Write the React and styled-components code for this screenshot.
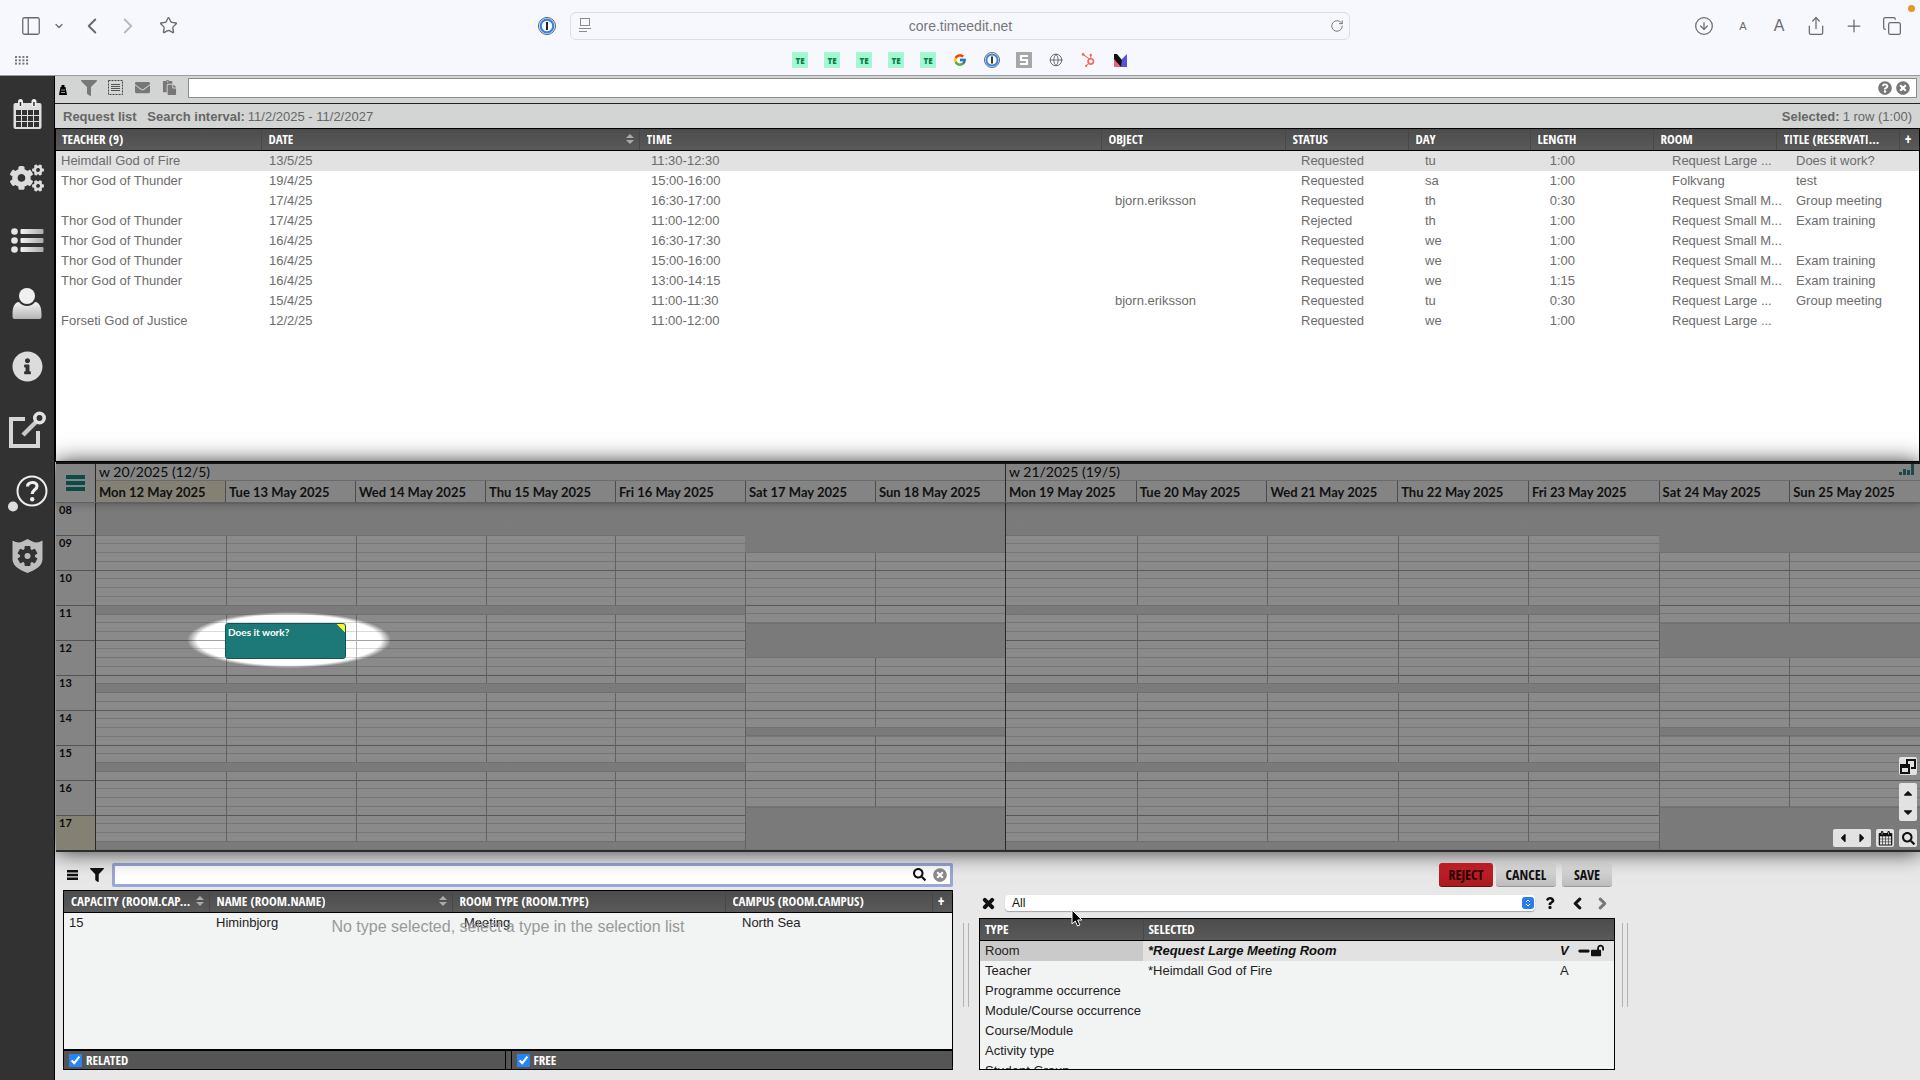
import React from "react";
import styled, { createGlobalStyle, css } from "styled-components";
import { ChevronDown, ChevronLeft, ChevronRight, Star, PanelLeft, Globe, RotateCw, CircleArrowDown, Share, Plus, Copy } from "lucide-react";
import { FaFilter, FaCogs, FaInfoCircle, FaSearch, FaTimes, FaTimesCircle, FaQuestion, FaQuestionCircle, FaChevronLeft, FaChevronRight, FaHubspot, FaLockOpen, FaMinus, FaEnvelope, FaPaste, FaCaretUp, FaCaretDown, FaCaretLeft, FaCaretRight } from "react-icons/fa";
import { FcGoogle } from "react-icons/fc";

const sans = `"Helvetica Neue Light", "Liberation Sans", Arial, sans-serif`;
const condensed = `"Open Sans Condensed", "Liberation Sans Narrow", "Open Sans", sans-serif`;
const lato = `Lato, "Open Sans", sans-serif`;

const GlobalStyle = createGlobalStyle`
  *, *::before, *::after { box-sizing: border-box; }
  body { margin: 0; font-family: ${sans}; font-size: 13px; background: #e8e8e8; }
  button, input, select { font: inherit; color: inherit; }
  button { cursor: pointer; }
  svg { flex: none; }
`;

const plainButton = css`
  display: inline-flex;
  align-items: center;
  justify-content: center;
  padding: 0;
  border: 0;
  background: none;
`;

const Page = styled.div`
  display: flex;
  flex-direction: column;
  height: 100vh;
  overflow: hidden;
`;

/* ---------- browser window ---------- */

const Chrome = styled.header`
  position: relative;
  flex: none;
  background: #f7f8fd;
  border-bottom: 1px solid #9b9ba1;
  color: #6a6a6e;
`;
const RecordingDot = styled.span`
  position: absolute;
  top: 5px;
  right: 5px;
  width: 7px;
  height: 7px;
  border-radius: 50%;
  background: #e29a1c;
`;
const ChromeBar = styled.div`
  display: grid;
  grid-template-columns: 1fr minmax(0, 780px) 1fr;
  align-items: center;
  height: 51px;
`;
const ChromeGroup = styled.div`
  display: flex;
  align-items: center;
  justify-content: ${(p) => (p.$end ? "flex-end" : "flex-start")};
  padding: 0 9px 0 12px;
`;
const ChromeButton = styled.button`
  ${plainButton}
  width: ${(p) => p.$w}px;
  height: 28px;
  margin-left: ${(p) => (p.$push ? "auto" : "0")};
  color: ${(p) => (p.$faded ? "#b9b9bf" : "#6a6a6e")};
  font-size: ${(p) => (p.$size || 13)}px;
`;
const Address = styled.div`
  display: flex;
  align-items: center;
  gap: 8px;
  height: 28px;
  padding: 0 5px 0 8px;
  border: 1px solid #dcdde3;
  border-radius: 6px;
`;
const AddressInput = styled.input`
  flex: 1;
  min-width: 0;
  border: 0;
  background: none;
  text-align: center;
  font-size: 14px;
  color: #77777b;
`;
const Bookmarks = styled.nav`
  display: grid;
  grid-template-columns: 1fr auto 1fr;
  align-items: center;
  height: 24px;
  padding: 0 15px 6px;
`;
const BookmarkList = styled.div`
  display: flex;
  gap: 16px;
`;
const Bookmark = styled.a`
  display: flex;
  align-items: center;
  justify-content: center;
  width: 16px;
  height: 16px;
  font: 800 8px "Open Sans", sans-serif;
  text-decoration: none;
  color: #0a7d4e;
  background: ${(p) => p.$bg || "none"};
`;

/* ---------- shell ---------- */

const Shell = styled.div`
  flex: 1;
  min-height: 0;
  display: flex;
`;
const Sidebar = styled.nav`
  position: relative;
  z-index: 3;
  flex: none;
  width: 55px;
  padding-top: 7px;
  background: #323232;
  border-right: 1px solid #000;
`;
const SidebarButton = styled.button`
  ${plainButton}
  width: 54px;
  height: 63px;
  color: #dcdcdc;
`;
const Main = styled.main`
  flex: 1;
  min-width: 0;
  display: flex;
  flex-direction: column;
`;

/* ---------- request list ---------- */

const RequestPanel = styled.section`
  flex: 1;
  min-height: 0;
  display: flex;
  flex-direction: column;
  background: #fff;
`;
const RequestToolbar = styled.div`
  display: flex;
  align-items: center;
  height: 28px;
  padding: 2px 3px 6px 1px;
  background: #d3d5d4;
  border-bottom: 1px solid #222;
`;
const ToolButton = styled.button`
  ${plainButton}
  width: ${(p) => p.$w || 26}px;
  height: 20px;
  color: ${(p) => p.$c || "#777"};
`;
const ListSearch = styled.div`
  flex: 1;
  display: flex;
  align-items: center;
  height: 20px;
  margin-left: 12px;
  padding-right: 4px;
  background: #fff;
  border: 1px solid #8c8c8c;
`;
const BareInput = styled.input`
  flex: 1;
  min-width: 0;
  height: 100%;
  padding: 0 4px;
  border: 0;
  outline: 0;
  background: none;
`;
const RequestInfo = styled.div`
  display: flex;
  justify-content: space-between;
  align-items: center;
  height: 24px;
  padding: 0 8px;
  background: #d3d5d4;
  color: #666;
  b { margin-right: 3px; }
  b + b { margin-left: 4px; }
`;
const TableFrame = styled.div`
  flex: 1;
  min-height: 0;
  overflow: hidden;
  position: relative;
  border: 1px solid #000;
  background: ${(p) => p.$bg || "#fff"};
`;
const Table = styled.table`
  width: 100%;
  table-layout: fixed;
  border-collapse: collapse;
`;
const Th = styled.th`
  height: 21px;
  padding: 0 5px 0 ${(p) => (p.$pad === undefined ? 7 : p.$pad)}px;
  text-align: left;
  font: 700 ${(p) => (p.$add ? 16 : 13)}px/20px ${condensed};
  white-space: nowrap;
  color: #fff;
  background: linear-gradient(#4c4c4c, #5a5a5a);
  border-bottom: 1px solid #000;
  border-left: ${(p) => (p.$first ? "0" : "1px solid #474747")};
`;
const ThInner = styled.span`
  display: flex;
  align-items: center;
  justify-content: space-between;
`;
const Clip = styled.span`
  overflow: hidden;
  text-overflow: ellipsis;
`;
const Tr = styled.tr`
  height: 20px;
  background: ${(p) => (p.$selected ? "#e2e2e2" : "transparent")};
`;
const Td = styled.td`
  padding: 0 ${(p) => p.$right || 0}px 0 ${(p) => p.$pad || 0}px;
  text-align: ${(p) => (p.$right ? "right" : "left")};
  line-height: 20px;
  white-space: nowrap;
  color: ${(p) => p.$c || "#6c6c6c"};
  background: ${(p) => p.$bg || "transparent"};
  font-style: ${(p) => (p.$em ? "italic" : "normal")};
`;
const RowIcons = styled.span`
  display: flex;
  align-items: center;
  gap: 1px;
`;

/* ---------- calendar ---------- */

const Calendar = styled.section`
  position: relative;
  z-index: 2;
  flex: none;
  border-top: 2px solid #161616;
  border-bottom: 2px solid #2c2c2c;
  box-shadow: 0 0 21px rgba(0, 0, 0, 0.8);
  background: #e2e2e2;
  margin-left: 1px;
  font-family: ${lato};
  color: #111;
`;
const CalHead = styled.div`
  position: relative;
  display: flex;
  height: 39px;
  background: #f4f4f4;
  border-bottom: 1px solid #b0b0b0;
  box-shadow: 0 2px 8px rgba(0, 0, 0, 0.22);
`;
const Corner = styled.div`
  flex: none;
  width: 39px;
  display: flex;
  align-items: center;
  justify-content: center;
`;
const CornerButton = styled.button`
  ${plainButton}
  color: #17897f;
`;
const WeekHead = styled.div`
  flex: ${(p) => p.$grow};
  min-width: 0;
  border-left: 1px solid #4a4a4a;
`;
const WeekTitle = styled.div`
  height: 17px;
  padding-left: 3px;
  font-size: 14px;
  line-height: 16px;
  border-bottom: 1px solid #c4c4c4;
`;
const DayHeads = styled.div`
  display: flex;
`;
const DayHead = styled.div`
  flex: 1;
  min-width: 0;
  height: 21px;
  padding-left: 3px;
  font-size: 13px;
  font-weight: 700;
  line-height: 23px;
  white-space: nowrap;
  color: #1e1e1e;
  border-left: ${(p) => (p.$first ? "0" : "1px solid #8c8c8c")};
  background: ${(p) => (p.$today ? "#f4efd6" : "transparent")};
`;
const CalBody = styled.div`
  display: flex;
  height: 347px;
`;
const Hours = styled.div`
  flex: none;
  width: 39px;
  background: #f4f4f4;
  overflow: hidden;
`;
const Hour = styled.div`
  height: ${(p) => (p.$short ? 32 : 35)}px;
  padding: 0 3px;
  font-size: 11px;
  font-weight: 700;
  line-height: 14px;
  border-top: ${(p) => (p.$short ? "0" : "1px solid #999")};
  background: ${(p) => (p.$today ? "#f4efd6" : "transparent")};
`;
const Week = styled.div`
  flex: ${(p) => p.$grow};
  min-width: 0;
  display: flex;
  border-left: 1px solid #4a4a4a;
`;
const Day = styled.div`
  flex: 1;
  min-width: 0;
  display: flex;
  flex-direction: column;
  background-color: #fff;
  background-image: repeating-linear-gradient(
    #a3a3a3 0 1px, transparent 1px 8px,
    #d9d9d9 8px 9px, transparent 9px 17px,
    #d9d9d9 17px 18px, transparent 18px 26px,
    #d9d9d9 26px 27px, transparent 27px 35px
  );
  background-position: 0 32px;
  background-size: 100% 35px;
`;
const Slot = styled.div`
  flex: none;
  height: ${(p) => p.$h}px;
  background: ${(p) => (p.$closed ? "#e2e2e2" : "transparent")};
  border: 0 solid #cfcfcf;
  border-width: ${(p) => (p.$closed ? "1px 0" : "0")};
  border-left: ${(p) => (p.$line ? "1px solid #b4b4b4" : "0")};
`;
const Dim = styled.div`
  position: absolute;
  inset: 0;
  pointer-events: none;
  background: radial-gradient(ellipse 102px 28px at 233px 176px, transparent 90%, rgba(0, 0, 0, 0.46) 100%);
`;
const Booking = styled.button`
  position: absolute;
  top: 159px;
  left: 169px;
  width: 121px;
  height: 36px;
  padding: 1px 2px;
  display: flex;
  justify-content: flex-start;
  align-items: flex-start;
  overflow: hidden;
  border: 1px solid #0f5654;
  border-radius: 3px;
  background: linear-gradient(225deg, #fdf22a 6px, #1c7977 6px);
  color: #fff;
  font-size: 10px;
  font-weight: 700;
  line-height: 14px;
`;
const Usage = styled.svg`
  position: absolute;
  top: 0;
  right: 5px;
`;
const Controls = styled.div`
  position: absolute;
  right: 3px;
  bottom: 3px;
  display: flex;
  flex-direction: column;
  align-items: flex-end;
  gap: 8px;
`;
const ControlRow = styled.div`
  display: flex;
  gap: 5px;
`;
const ControlGroup = styled.div`
  display: flex;
  flex-direction: ${(p) => (p.$column ? "column" : "row")};
  border-radius: 2px;
  background: #e2e2e2;
`;
const ControlButton = styled.button`
  ${plainButton}
  width: ${(p) => p.$w || 18}px;
  height: ${(p) => p.$h || 18}px;
  color: #111;
`;

/* ---------- booking area ---------- */

const Bottom = styled.section`
  flex: none;
  display: grid;
  grid-template-columns: minmax(0, 890px) 26px minmax(0, 636px) 20px;
  height: 228px;
  padding: 10px 0 10px 8px;
  background: #e8e8e8;
  color: #111;
`;
const Column = styled.div`
  display: flex;
  flex-direction: column;
  min-width: 0;
  min-height: 0;
`;
const Splitter = styled.div`
  align-self: start;
  justify-self: center;
  width: 6px;
  height: 84px;
  margin-top: 61px;
  border: solid #b4b4b4;
  border-width: 0 1px;
`;
const SearchRow = styled.div`
  display: flex;
  align-items: center;
  height: 25px;
  margin-bottom: 3px;
`;
const SearchBox = styled.div`
  flex: 1;
  display: flex;
  align-items: center;
  gap: 7px;
  height: 24px;
  padding-right: 3px;
  background: #fff;
  border: 3px solid #9aa5d8;
  border-radius: 2px;
`;
const EmptyNote = styled.p`
  position: absolute;
  top: 25px;
  left: 0;
  right: 0;
  margin: 0;
  text-align: center;
  font-size: 16px;
  line-height: 22px;
  color: #999;
  pointer-events: none;
`;
const Filters = styled.div`
  display: flex;
  gap: 5px;
  height: 20px;
  border: 1px solid #000;
  background: #555;
`;
const FilterLabel = styled.label`
  flex: 1;
  display: flex;
  align-items: center;
  gap: 4px;
  padding-left: 5px;
  font: 700 13px/18px ${condensed};
  color: #fff;
  border: solid #000;
  border-width: ${(p) => (p.$first ? "0 1px 0 0" : "0 0 0 1px")};
`;
const Check = styled.input`
  width: 13px;
  height: 13px;
  margin: 0;
  accent-color: #2a84f0;
`;
const Actions = styled.div`
  display: flex;
  justify-content: flex-end;
  gap: 3px;
  height: 25px;
  padding: 1px 3px 0 0;
  margin-bottom: 8px;
`;
const ActionButton = styled.button`
  width: ${(p) => p.$w}px;
  height: 24px;
  margin-left: ${(p) => p.$gap || 0}px;
  padding: 0;
  border: 0;
  border-bottom: 1px solid ${(p) => (p.$danger ? "#5d1010" : "#999")};
  border-radius: 3px;
  background: ${(p) => (p.$danger ? "linear-gradient(#cf2229, #a81a20)" : "linear-gradient(#e4e4e4, #bcbcbc)")};
  color: ${(p) => (p.$danger ? "#2c0000" : "#111")};
  font: 700 14px ${condensed};
`;
const TypeRow = styled.div`
  display: flex;
  align-items: center;
  height: 16px;
  margin-bottom: 7px;
`;
const SelectBox = styled.div`
  flex: 1;
  display: flex;
  align-items: center;
  height: 16px;
  padding-right: 1px;
  margin-left: 8px;
  background: #fff;
  border-radius: 4px;
  box-shadow: 0 1px 1px rgba(0, 0, 0, 0.3);
`;
const Select = styled.select`
  flex: 1;
  height: 16px;
  padding: 0 7px;
  border: 0;
  background: none;
  appearance: none;
  font-size: 12px;
`;
const Badge = styled.span`
  display: flex;
  width: 12px;
  height: 12px;
  border-radius: 3px;
  background: #2b7cf0;
`;
const Cursor = styled.svg`
  position: fixed;
  left: 1071px;
  top: 909px;
  z-index: 5;
  pointer-events: none;
`;

/* ---------- drawings ---------- */

const CalendarGlyph = ({ size = 31, id = "c", light = true, cell = "#323232" }) => (
  <svg width={size} height={size} viewBox="0 0 31 31" aria-hidden="true">
    <rect x="1.500" y="4" width="28" height="26" rx="2" fill={light ? "#dedede" : "#111"} />
    <rect x="6" y="0" width="5" height="8" rx="2.500" fill={light ? "#eee" : "#111"} />
    <rect x="19.500" y="0" width="5" height="8" rx="2.500" fill={light ? "#eee" : "#111"} />
    <rect x="7.700" y="3" width="1.500" height="4" fill={cell} />
    <rect x="21.200" y="3" width="1.500" height="4" fill={cell} />
    {[0, 1, 2].map((r) => [0, 1, 2, 3].map((c) => (
      <rect key={id + r + c} x={4 + c * 6} y={11 + r * 6} width="5" height="5" fill={cell} />
    )))}
  </svg>
);
const ListGlyph = () => (
  <svg width="33" height="25" viewBox="0 0 33 25" aria-hidden="true">
    <defs><linearGradient id="lst" x1="0" x2="1"><stop offset="0" stopColor="#f2f2f2" /><stop offset="1" stopColor="#aaa" /></linearGradient></defs>
    {[0, 9, 18].map((y) => (
      <g key={y}><circle cx="3.500" cy={y + 3.5} r="3.300" fill="#e6e6e6" /><rect x="9.500" y={y + 1} width="23" height="5" rx="1" fill="url(#lst)" /></g>
    ))}
  </svg>
);
const UserGlyph = () => (
  <svg width="30" height="31" viewBox="0 0 30 31" aria-hidden="true">
    <defs><linearGradient id="usr" x1="0" x2="0" y1="0" y2="1"><stop offset="0" stopColor="#f4f4f4" /><stop offset="1" stopColor="#b4b4b4" /></linearGradient></defs>
    <path d="M7 14C2.500 14.500.500 19 .500 26v3q0 2 2 2h25q2 0 2-2v-3c0-7-2-11.500-6.500-12a10 10 0 0 1-16 0z" fill="url(#usr)" />
    <circle cx="15" cy="8" r="8" fill="#f0f0f0" />
  </svg>
);
const LaunchGlyph = () => (
  <svg width="37" height="38" viewBox="0 0 37 38" fill="none" aria-hidden="true">
    <path d="M16 8H2v27h27V20" stroke="#d6d6d6" strokeWidth="4" />
    <path d="M14 24L28 10" stroke="#c8c8c8" strokeWidth="4.500" />
    <circle cx="30.500" cy="7" r="4.700" stroke="#e2e2e2" strokeWidth="3.600" />
  </svg>
);
const HelpGlyph = () => (
  <svg width="44" height="40" viewBox="0 0 44 40" fill="none" aria-hidden="true">
    <circle cx="27" cy="18" r="14.500" stroke="#eee" strokeWidth="2" />
    <path d="M22.500 13.500c0-5 9.500-5.500 9.500-.5 0 4-4.800 3.600-4.800 8" stroke="#eee" strokeWidth="3.200" />
    <circle cx="27.200" cy="26.300" r="2.200" fill="#eee" />
    <circle cx="8" cy="33.500" r="5" fill="#dedede" />
  </svg>
);
const ShieldGlyph = () => (
  <svg width="31" height="34" viewBox="0 0 31 34" aria-hidden="true">
    <path d="M.500 1.500Q6 5 10.500 2.500L15.500 0l5 2.500Q25 5 30.500 1.500V20c0 7-7 11-15 14C7.500 31 .500 27 .500 20z" fill="#bdbdbd" />
    <g fill="#323232">
      {[0, 60, 120].map((a) => <rect key={a} x="12.500" y="7" width="6" height="20" rx="1" transform={`rotate(${a} 15.500 17)`} />)}
      <circle cx="15.500" cy="17" r="7.500" />
    </g>
    <circle cx="15.500" cy="17" r="3" fill="#bdbdbd" />
  </svg>
);
const SortGlyph = () => (
  <svg width="8" height="10" viewBox="0 0 8 10" aria-hidden="true"><path d="M0 4L4 0l4 4zM0 6h8l-4 4z" fill="#aaa" /></svg>
);
const OneGlyph = ({ size = 18 }) => (
  <svg width={size} height={size} viewBox="0 0 18 18" aria-hidden="true">
    <circle cx="9" cy="9" r="8.500" fill="#fff" stroke="#4a5c74" />
    <circle cx="9" cy="9" r="6.300" fill="#fff" stroke="#3584e0" strokeWidth="2.200" />
    <rect x="8" y="5" width="2" height="8" fill="#222" />
  </svg>
);
const ReaderGlyph = () => (
  <svg width="12" height="15" viewBox="0 0 12 15" fill="none" stroke="#8a8a8e" aria-hidden="true"><rect x="1.500" y=".5" width="9" height="7" /><path d="M0 10.500h12M0 13.500h8" /></svg>
);
const SelectionGlyph = () => (
  <svg width="15" height="15" viewBox="0 0 15 15" fill="none" stroke="#444" aria-hidden="true"><rect x=".5" y=".5" width="14" height="14" strokeDasharray="2 1" /><path d="M3 4.500h9M3 6.500h9M3 8.500h9M3 10.500h9" stroke="#555" /></svg>
);
const WeightGlyph = () => (
  <svg width="8" height="14" viewBox="0 0 8 14" aria-hidden="true"><path d="M2.500 4h3v2h1l1.500 8H0l1.500-8h1z" fill="#000" /><path d="M2 9h4M2 11.500h4" stroke="#999" /></svg>
);
const WindowsGlyph = () => (
  <svg width="16" height="15" viewBox="0 0 16 15" fill="none" stroke="#111" strokeWidth="2" aria-hidden="true"><path d="M7 5V1h8v8h-4" /><rect x="1" y="6" width="8" height="8" /><path d="M1 7.500h8" strokeWidth="3" /></svg>
);
const MenuGlyph = () => (
  <svg width="11" height="10" viewBox="0 0 11 10" aria-hidden="true"><path d="M0 0h11v2.400H0zM0 3.800h11v2.400H0zM0 7.600h11V10H0z" fill="currentColor" /></svg>
);

/* ---------- data ---------- */

const requestColumns = [
  { label: "TEACHER (9)", width: 205, pad: 5 },
  { label: "DATE", width: 378, pad: 8, sort: true },
  { label: "TIME", pad: 12 },
  { label: "OBJECT", width: 184, pad: 14 },
  { label: "STATUS", width: 123, pad: 16 },
  { label: "DAY", width: 122, pad: 17 },
  { label: "LENGTH", width: 123, pad: 0, right: 78 },
  { label: "ROOM", width: 123, pad: 19 },
  { label: "TITLE (RESERVATI...", width: 123, pad: 20 },
];
const thor = "Thor God of Thunder";
const small = "Request Small M...";
const large = "Request Large ...";
const requests = [
  ["Heimdall God of Fire", "13/5/25", "11:30-12:30", "", "Requested", "tu", "1:00", large, "Does it work?"],
  [thor, "19/4/25", "15:00-16:00", "", "Requested", "sa", "1:00", "Folkvang", "test"],
  ["", "17/4/25", "16:30-17:00", "bjorn.eriksson", "Requested", "th", "0:30", small, "Group meeting"],
  [thor, "17/4/25", "11:00-12:00", "", "Rejected", "th", "1:00", small, "Exam training"],
  [thor, "16/4/25", "16:30-17:30", "", "Requested", "we", "1:00", small, ""],
  [thor, "16/4/25", "15:00-16:00", "", "Requested", "we", "1:00", small, "Exam training"],
  [thor, "16/4/25", "13:00-14:15", "", "Requested", "we", "1:15", small, "Exam training"],
  ["", "15/4/25", "11:00-11:30", "bjorn.eriksson", "Requested", "tu", "0:30", large, "Group meeting"],
  ["Forseti God of Justice", "12/2/25", "11:00-12:00", "", "Requested", "we", "1:00", large, ""],
];
const weekNames = ["Mon", "Tue", "Wed", "Thu", "Fri", "Sat", "Sun"];
const weeks = [
  { title: "w 20/2025 (12/5)", start: 12, grow: 910 },
  { title: "w 21/2025 (19/5)", start: 19, grow: 915 },
];
// Heights alternate closed, open, closed ... from the top of the grid.
const weekdaySlots = [33, 69, 10, 68, 10, 69, 10, 69, 9];
const weekendSlots = [50, 70, 35, 69, 9, 71, 43];
const hours = ["08", "09", "10", "11", "12", "13", "14", "15", "16", "17"];
const roomColumns = [
  { label: "CAPACITY (ROOM.CAP...", width: 145, pad: 5, value: "15", sort: true },
  { label: "NAME (ROOM.NAME)", width: 243, pad: 7, value: "Himinbjorg", sort: true },
  { label: "ROOM TYPE (ROOM.TYPE)", width: 273, pad: 12, value: "Meeting" },
  { label: "CAMPUS (ROOM.CAMPUS)", pad: 17, value: "North Sea" },
];
const types = ["Programme occurrence", "Module/Course occurrence", "Course/Module", "Activity type", "Student Group"];

const HeadCell = ({ col, first, pad }) => (
  <Th $first={first} $pad={pad} scope="col"><ThInner><Clip>{col.label}</Clip>{col.sort && <SortGlyph />}</ThInner></Th>
);

function BrowserBar() {
  return (
    <Chrome>
      <RecordingDot />
      <ChromeBar>
        <ChromeGroup>
          <ChromeButton $w={38} aria-label="Sidebar"><PanelLeft size={22} strokeWidth={1.4} /></ChromeButton>
          <ChromeButton $w={18} aria-label="Tab groups"><ChevronDown size={12} strokeWidth={2.5} /></ChromeButton>
          <ChromeButton $w={48} aria-label="Back"><ChevronLeft size={26} strokeWidth={1.8} /></ChromeButton>
          <ChromeButton $w={24} $faded aria-label="Forward"><ChevronRight size={26} strokeWidth={1.8} /></ChromeButton>
          <ChromeButton $w={56} aria-label="Favourites"><Star size={19} strokeWidth={1.7} /></ChromeButton>
          <ChromeButton $w={28} $push aria-label="Passwords"><OneGlyph /></ChromeButton>
        </ChromeGroup>
        <Address>
          <ReaderGlyph />
          <AddressInput aria-label="Address" defaultValue="core.timeedit.net" />
          <RotateCw size={14} strokeWidth={1.5} />
        </Address>
        <ChromeGroup $end>
          <ChromeButton $w={42} aria-label="Downloads"><CircleArrowDown size={20} strokeWidth={1.5} /></ChromeButton>
          <ChromeButton $w={36} $size={11}>A</ChromeButton>
          <ChromeButton $w={36} $size={16}>A</ChromeButton>
          <ChromeButton $w={38} aria-label="Share"><Share size={20} strokeWidth={1.5} /></ChromeButton>
          <ChromeButton $w={38} aria-label="New tab"><Plus size={20} strokeWidth={1.5} /></ChromeButton>
          <ChromeButton $w={38} aria-label="Tabs"><Copy size={20} strokeWidth={1.5} /></ChromeButton>
        </ChromeGroup>
      </ChromeBar>
      <Bookmarks>
        <svg width="14" height="9" viewBox="0 0 14 9" aria-hidden="true">
          {[0, 1, 2].map((r) => [0, 1, 2, 3].map((c) => <rect key={`${r}${c}`} x={c * 3.7} y={r * 3.3} width="2" height="2" fill="#77777b" />))}
        </svg>
        <BookmarkList>
          {[1, 2, 3, 4, 5].map((n) => <Bookmark key={n} href="#te" $bg="#a5f7d3">TE</Bookmark>)}
          <Bookmark href="#g" aria-label="Google"><FcGoogle size={14} /></Bookmark>
          <Bookmark href="#op" aria-label="Passwords"><OneGlyph size={16} /></Bookmark>
          <Bookmark href="#s" aria-label="S">
            <svg width="16" height="16" viewBox="0 0 16 16" aria-hidden="true"><rect width="16" height="16" fill="#a6a6a6" /><path d="M12 4H5v4h6v4H4" fill="none" stroke="#fff" strokeWidth="2.200" /></svg>
          </Bookmark>
          <Bookmark href="#w" aria-label="Web"><Globe size={14} color="#666" strokeWidth={1.6} /></Bookmark>
          <Bookmark href="#h" aria-label="HubSpot"><FaHubspot size={14} color="#f4695c" /></Bookmark>
          <Bookmark href="#m" aria-label="M">
            <svg width="13" height="13" viewBox="0 0 13 13" aria-hidden="true"><path d="M0 0h3l5 6v7H0z" fill="#111" /><path d="M0 5l7 8H0z" fill="#f0607e" /><path d="M13 0L8 5l-1 8h6z" fill="#5b4fe0" /></svg>
          </Bookmark>
        </BookmarkList>
      </Bookmarks>
    </Chrome>
  );
}

function Requests() {
  return (
    <RequestPanel>
      <RequestToolbar>
        <ToolButton $w={14} $c="#000" aria-label="Weight"><WeightGlyph /></ToolButton>
        <ToolButton $w={38} aria-label="Filter"><FaFilter size={16} /></ToolButton>
        <ToolButton $w={14} aria-label="Select all"><SelectionGlyph /></ToolButton>
        <ToolButton $w={40} aria-label="Mail"><FaEnvelope size={15} /></ToolButton>
        <ToolButton $w={14} aria-label="Copy"><FaPaste size={15} /></ToolButton>
        <ListSearch>
          <BareInput aria-label="Search requests" />
          <ToolButton $w={18} aria-label="Help"><FaQuestionCircle size={14} /></ToolButton>
          <ToolButton $w={18} aria-label="Clear"><FaTimesCircle size={14} /></ToolButton>
        </ListSearch>
      </RequestToolbar>
      <RequestInfo>
        <span><b>Request list</b> <b>Search interval:</b>11/2/2025 - 11/2/2027</span>
        <span><b>Selected:</b>1 row (1:00)</span>
      </RequestInfo>
      <TableFrame>
        <Table>
          <colgroup>
            {requestColumns.map((c) => <col key={c.label} width={c.width} />)}
            <col width={20} />
          </colgroup>
          <thead>
            <tr>
              {requestColumns.map((c, i) => <HeadCell key={c.label} col={c} first={i === 0} pad={i === 0 ? 6 : 7} />)}
              <Th $add $pad={5} scope="col">+</Th>
            </tr>
          </thead>
          <tbody>
            {requests.map((row, i) => (
              <Tr key={i} $selected={i === 0}>
                {row.map((v, j) => <Td key={j} $pad={requestColumns[j].pad} $right={requestColumns[j].right}>{v}</Td>)}
                <Td />
              </Tr>
            ))}
          </tbody>
        </Table>
      </TableFrame>
    </RequestPanel>
  );
}

function Schedule() {
  return (
    <Calendar>
      <CalHead>
        <Corner>
          <CornerButton aria-label="Calendar menu">
            <svg width="19" height="16" viewBox="0 0 19 16" aria-hidden="true"><path d="M0 0h19v4H0zM0 6h19v4H0zM0 12h19v4H0z" fill="currentColor" /></svg>
          </CornerButton>
        </Corner>
        {weeks.map((w) => (
          <WeekHead key={w.title} $grow={w.grow}>
            <WeekTitle>{w.title}</WeekTitle>
            <DayHeads>
              {weekNames.map((d, i) => (
                <DayHead key={d} $first={i === 0} $today={w.start + i === 12}>{`${d} ${w.start + i} May 2025`}</DayHead>
              ))}
            </DayHeads>
          </WeekHead>
        ))}
      </CalHead>
      <CalBody>
        <Hours>{hours.map((h) => <Hour key={h} $short={h === "08"} $today={h === "17"}>{h}</Hour>)}</Hours>
        {weeks.map((w) => (
          <Week key={w.title} $grow={w.grow}>
            {weekNames.map((d, i) => (
              <Day key={d}>
                {(i > 4 ? weekendSlots : weekdaySlots).map((h, k) => (
                  <Slot key={k} $h={h} $closed={k % 2 === 0} $line={i === 5 ? k > 0 : i > 0 && k % 2 === 1} />
                ))}
              </Day>
            ))}
          </Week>
        ))}
      </CalBody>
      <Dim />
      <Booking>Does it work?</Booking>
      <Usage width="16" height="11" viewBox="0 0 16 11" aria-hidden="true"><path d="M0 8h3v3H0zM4 5h3v6H4zM8 6h3v5H8zM12 0h3v11h-3z" fill="#1b4a48" /></Usage>
      <Controls>
        <ControlGroup><ControlButton aria-label="Windows"><WindowsGlyph /></ControlButton></ControlGroup>
        <ControlGroup $column>
          <ControlButton $h={19} aria-label="Up"><FaCaretUp size={14} /></ControlButton>
          <ControlButton $h={19} aria-label="Down"><FaCaretDown size={14} /></ControlButton>
        </ControlGroup>
        <ControlRow>
          <ControlGroup>
            <ControlButton $w={19} aria-label="Previous"><FaCaretLeft size={14} /></ControlButton>
            <ControlButton $w={19} aria-label="Next"><FaCaretRight size={14} /></ControlButton>
          </ControlGroup>
          <ControlGroup><ControlButton aria-label="Pick date"><CalendarGlyph size={15} light={false} id="s" cell="#e2e2e2" /></ControlButton></ControlGroup>
          <ControlGroup><ControlButton aria-label="Zoom"><FaSearch size={13} /></ControlButton></ControlGroup>
        </ControlRow>
      </Controls>
    </Calendar>
  );
}

function BookingArea() {
  return (
    <Bottom>
      <Column>
        <SearchRow>
          <ToolButton $w={18} $c="#111" aria-label="Menu"><MenuGlyph /></ToolButton>
          <ToolButton $w={31} $c="#111" aria-label="Filter"><FaFilter size={14} /></ToolButton>
          <SearchBox>
            <BareInput aria-label="Search objects" />
            <FaSearch size={13} />
            <FaTimesCircle size={14} color="#8a8a8a" />
          </SearchBox>
        </SearchRow>
        <TableFrame $bg="#f2f3f3">
          <Table>
            <colgroup>
              {roomColumns.map((c) => <col key={c.label} width={c.width} />)}
              <col width={20} />
            </colgroup>
            <thead>
              <tr>
                {roomColumns.map((c, i) => <HeadCell key={c.label} col={c} first={i === 0} />)}
                <Th $add $pad={5} scope="col">+</Th>
              </tr>
            </thead>
            <tbody>
              <Tr>{roomColumns.map((c) => <Td key={c.label} $pad={c.pad} $c="#222">{c.value}</Td>)}</Tr>
            </tbody>
          </Table>
          <EmptyNote>No type selected, select a type in the selection list</EmptyNote>
        </TableFrame>
        <Filters>
          <FilterLabel $first><Check type="checkbox" defaultChecked />RELATED</FilterLabel>
          <FilterLabel><Check type="checkbox" defaultChecked />FREE</FilterLabel>
        </Filters>
      </Column>
      <Splitter />
      <Column>
        <Actions>
          <ActionButton $w={54} $danger>REJECT</ActionButton>
          <ActionButton $w={60}>CANCEL</ActionButton>
          <ActionButton $w={50} $gap={3}>SAVE</ActionButton>
        </Actions>
        <TypeRow>
          <ToolButton $w={18} $c="#111" aria-label="Clear all"><FaTimes size={15} stroke="currentColor" strokeWidth={40} /></ToolButton>
          <SelectBox>
            <Select aria-label="Type filter"><option>All</option></Select>
            <Badge><svg width="12" height="12" viewBox="0 0 12 12" fill="none" stroke="#fff" aria-hidden="true"><path d="M4 5l2-2 2 2M4 7l2 2 2-2" /></svg></Badge>
          </SelectBox>
          <ToolButton $w={30} $c="#111" aria-label="Help"><FaQuestion size={12} /></ToolButton>
          <ToolButton $w={24} $c="#111" aria-label="Previous"><FaChevronLeft size={13} stroke="currentColor" strokeWidth={40} /></ToolButton>
          <ToolButton $w={26} aria-label="Next"><FaChevronRight size={13} stroke="currentColor" strokeWidth={40} /></ToolButton>
        </TypeRow>
        <TableFrame $bg="#f2f3f3">
          <Table>
            <colgroup><col width={163} /><col /><col width={19} /><col width={40} /></colgroup>
            <thead>
              <tr><Th $first $pad={5} scope="col">TYPE</Th><Th $pad={5} colSpan={3} scope="col">SELECTED</Th></tr>
            </thead>
            <tbody>
              <Tr $selected>
                <Td $pad={5} $c="#222" $bg="#cacaca">Room</Td>
                <Td $pad={5} $c="#111" $em><b>*Request Large Meeting Room</b></Td>
                <Td $pad={5} $c="#111" $em><b>V</b></Td>
                <Td $pad={4} $c="#111"><RowIcons><FaMinus size={12} stroke="currentColor" strokeWidth={30} /><FaLockOpen size={13} /></RowIcons></Td>
              </Tr>
              <Tr>
                <Td $pad={5} $c="#222">Teacher</Td>
                <Td $pad={5} $c="#222">*Heimdall God of Fire</Td>
                <Td $pad={5} $c="#222">A</Td>
                <Td />
              </Tr>
              {types.map((t) => <Tr key={t}><Td $pad={5} $c="#222">{t}</Td><Td /><Td /><Td /></Tr>)}
            </tbody>
          </Table>
        </TableFrame>
      </Column>
      <Splitter />
    </Bottom>
  );
}

const navItems = [
  ["Calendar", <CalendarGlyph />],
  ["Settings", <FaCogs size={34} />],
  ["Lists", <ListGlyph />],
  ["User", <UserGlyph />],
  ["Information", <FaInfoCircle size={31} />],
  ["Launch", <LaunchGlyph />],
  ["Help", <HelpGlyph />],
  ["Administration", <ShieldGlyph />],
];

export default function App() {
  return (
    <Page>
      <GlobalStyle />
      <BrowserBar />
      <Shell>
        <Sidebar>{navItems.map(([name, icon]) => <SidebarButton key={name} aria-label={name}>{icon}</SidebarButton>)}</Sidebar>
        <Main>
          <Requests />
          <Schedule />
          <BookingArea />
        </Main>
      </Shell>
      <Cursor width="13" height="18" viewBox="0 0 13 18" aria-hidden="true"><path d="M1 1v14l3.300-3 2.200 5 2.400-1-2.200-5H11z" fill="#000" stroke="#fff" /></Cursor>
    </Page>
  );
}
